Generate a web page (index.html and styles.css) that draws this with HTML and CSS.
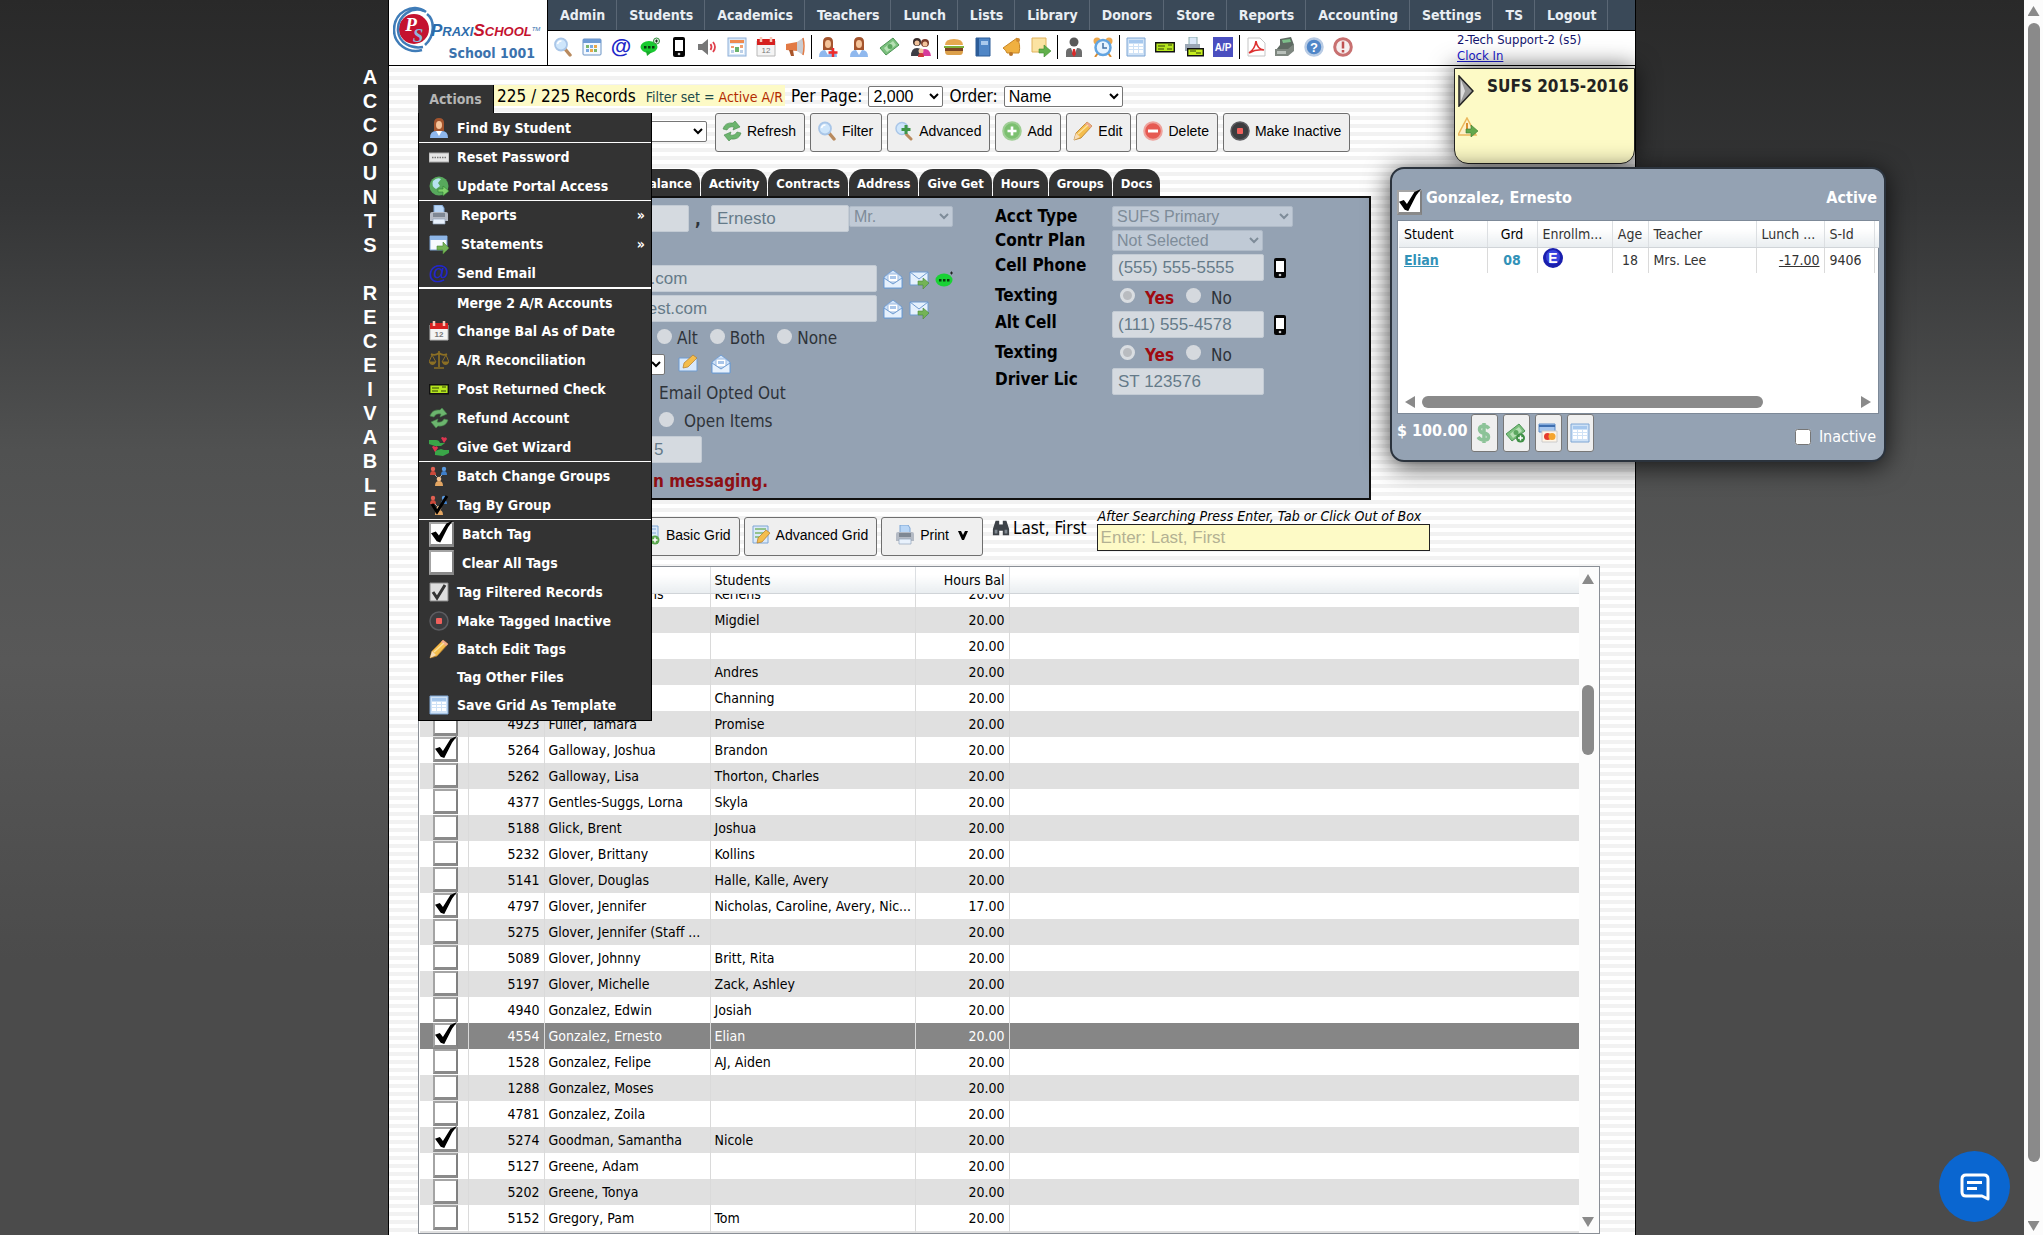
FILE: index.html
```html
<!DOCTYPE html>
<html lang="en">
<head>
  <meta charset="UTF-8">
  <meta name="viewport" content="width=device-width, initial-scale=1.0">
  <title>PraxiSchool - Accounts Receivable</title>
  <link rel="stylesheet" href="styles.css">
</head>
<body>
  <!-- icon sprite -->
  <svg class="sprite" aria-hidden="true">
    <symbol id="i-search" viewBox="0 0 20 20"><path d="M12 12l5 6" stroke="#b98a5e" stroke-width="3.4" stroke-linecap="round"/><circle cx="8" cy="7.500" r="6" fill="#cfe6fb" stroke="#a9c6e8" stroke-width="1.800"/><path d="M4.500 7a4 4 0 0 1 4-3" stroke="#fff" stroke-width="1.500" fill="none"/></symbol>
    <symbol id="i-searchplus" viewBox="0 0 20 20"><path d="M12 13l5 5" stroke="#b98a5e" stroke-width="3" stroke-linecap="round"/><circle cx="8" cy="7.500" r="6" fill="#cfe6fb" stroke="#a9c6e8" stroke-width="1.500"/><path d="M12 4v9M7.500 8.500h9" stroke="#3f9648" stroke-width="3"/></symbol>
    <symbol id="i-cal" viewBox="0 0 20 20"><rect x="1" y="2" width="18" height="16" rx="1" fill="#f4f9ff" stroke="#6b93c4"/><path d="M1 2h18v4H1z" fill="#6f9bd4"/><path d="M4 8h3v3H4zM12 12h3v3h-3z" fill="#7cb76b"/><path d="M8 8h3v3H8zM4 12h3v3H4z" fill="#7aa9e0"/><path d="M12 8h3v3h-3zM8 12h3v3H8z" fill="#eaa94a"/></symbol>
    <symbol id="i-at" viewBox="0 0 20 20"><text x="10" y="16" text-anchor="middle" font-family="Liberation Sans" font-size="21" font-weight="bold" fill="#2026c8">@</text></symbol>
    <symbol id="i-chat" viewBox="0 0 20 20"><ellipse cx="9" cy="10" rx="8.500" ry="6" fill="#19c930"/><path d="M6 14l1 5 5-4z" fill="#19a82a"/><path d="M4 9h2.500v2.500H4zM8 9h2.500v2.500H8zM12 9h2.500v2.500H12z" fill="#0b3b10"/><circle cx="16.500" cy="4" r="3" fill="#d9f3dc" stroke="#2f8a3a"/><path d="M16.500 2.500v3M15 4h3" stroke="#222"/></symbol>
    <symbol id="i-sms" viewBox="0 0 20 20"><ellipse cx="9" cy="11" rx="8.500" ry="6.500" fill="#19d234"/><path d="M4 10h2.500v2.500H4zM8 10h2.500v2.500H8zM12 10h2.500v2.500H12z" fill="#0b3b10"/><path d="M16.500 2.500v3M15 4h3" stroke="#222"/></symbol>
    <symbol id="i-phone" viewBox="0 0 20 20"><rect x="4" y="0" width="12" height="20" rx="2" fill="#050505"/><path d="M6 3h8v11H6z" fill="#fff"/><circle cx="10" cy="17" r="1.300" fill="#ccc"/></symbol>
    <symbol id="i-sound" viewBox="0 0 20 20"><path d="M0 7h4l6-5v16l-6-5H0z" fill="#777"/><path d="M12.500 7q2 3 0 6M15 5q4 5 0 10" stroke="#e0404c" stroke-width="1.800" fill="none"/></symbol>
    <symbol id="i-sched" viewBox="0 0 20 20"><rect x="1" y="1" width="18" height="18" fill="#d8e8f8" stroke="#8fb0d8"/><path d="M3 3h14v3H3z" fill="#f08a4e"/><path d="M3 7h14v10H3z" fill="#fff"/><path d="M4 9h3v2H4zM13 8h3v3h-3z" fill="#f0a070"/><path d="M8 10h4v5H8z" fill="#6bb36b"/><path d="M4 13h3v3H4zM13 13h3v3h-3z" fill="#bcd0e8"/></symbol>
    <symbol id="i-date" viewBox="0 0 20 20"><path d="M1 4h18v15H1z" fill="#f4f4f4" stroke="#b8b8b8"/><path d="M1 2h18v6H1z" fill="#d6201f"/><path d="M5 0v5M15 0v5" stroke="#f6c9b9" stroke-width="2.500"/><text x="10" y="16" text-anchor="middle" font-family="Liberation Sans" font-size="8" fill="#777">12</text></symbol>
    <symbol id="i-horn" viewBox="0 0 20 20"><path d="M1 7l11-2v9L1 13z" fill="#e27a45"/><path d="M12 5l6-4v17l-6-4z" fill="#c9ccd2"/><path d="M4 13h4l1 6H6z" fill="#a9552a"/><path d="M18 1q2 8 0 17" stroke="#e27a45" stroke-width="1.500" fill="none"/></symbol>
    <symbol id="i-person" viewBox="0 0 20 20"><path d="M5 13V5q0-5 5-5t5 5v8z" fill="#a4552e"/><ellipse cx="10" cy="7" rx="3" ry="4" fill="#f5c49a"/><path d="M1 20q0-7 6-7h6q6 0 6 7z" fill="#8fb8ee"/><path d="M7 13l3 5 3-5z" fill="#fff"/></symbol>
    <symbol id="i-personadd" viewBox="0 0 20 20"><use href="#i-person"/><path d="M15 11v9M10.500 15.500h9" stroke="#ef2b2b" stroke-width="2.500"/></symbol>
    <symbol id="i-money" viewBox="0 0 20 20"><path d="M0 11L13 1l6 7L6 18z" fill="#7cc07e" stroke="#4d9555"/><path d="M4 11l9-7 3 4-9 7z" fill="#b7e0b5"/><circle cx="10" cy="9.500" r="2.500" fill="#5ba75f"/></symbol>
    <symbol id="i-family" viewBox="0 0 20 20"><circle cx="6" cy="5" r="4" fill="#3a2c2a"/><circle cx="6" cy="6" r="2.500" fill="#f2c39b"/><circle cx="14" cy="6" r="4" fill="#7a3b2a"/><circle cx="14" cy="7" r="2.500" fill="#f2c39b"/><path d="M0 19q0-8 6-8t5 8z" fill="#3d3d45"/><path d="M9 19q0-7 5-7t6 7z" fill="#d63c9c"/><circle cx="10" cy="14" r="2.500" fill="#f2c39b"/><path d="M7 20q0-4 3-4t3 4z" fill="#ce3a3a"/></symbol>
    <symbol id="i-burger" viewBox="0 0 20 20"><path d="M1 8q0-6 9-6t9 6z" fill="#e6a850"/><path d="M0 9h20v2H0z" fill="#7fb03a"/><path d="M1 11h18v3H1z" fill="#7c4523"/><path d="M1 14h18q0 4-3 4H4q-3 0-3-4z" fill="#dca04a"/></symbol>
    <symbol id="i-book" viewBox="0 0 20 20"><path d="M3 1h14v18H3z" fill="#4f86c6" stroke="#2c5c98"/><path d="M3 1h3v18H3z" fill="#2c5c98"/><path d="M8 4h7v4H8z" fill="#a9c9ec"/></symbol>
    <symbol id="i-bell" viewBox="0 0 20 20"><path d="M1 11L15 1q4 6 2 15L5 16q-1-3-4-5z" fill="#f0b040" stroke="#c78626"/><circle cx="16" cy="3" r="2" fill="#d08a30"/><circle cx="9" cy="17" r="2" fill="#b9742a"/></symbol>
    <symbol id="i-noteout" viewBox="0 0 20 20"><path d="M1 1h14v14H1z" fill="#fbe3a2" stroke="#e0b25c"/><path d="M8 12h5V8l7 6-7 6v-4H8z" fill="#62b04c" stroke="#3e8a30" stroke-width=".6"/></symbol>
    <symbol id="i-suit" viewBox="0 0 20 20"><circle cx="10" cy="5" r="4.500" fill="#5a5a5a"/><path d="M2 20v-5q0-4 5-4h6q5 0 5 4v5z" fill="#6d6d6d"/><path d="M7 11h6l-3 8z" fill="#fff"/><path d="M9 12h2l1 5-2 3-2-3z" fill="#d92a2a"/></symbol>
    <symbol id="i-clock" viewBox="0 0 20 20"><circle cx="4" cy="4" r="3.500" fill="#eda84e"/><circle cx="16" cy="4" r="3.500" fill="#eda84e"/><path d="M5 16l-3 4M15 16l3 4" stroke="#d98c30" stroke-width="2"/><circle cx="10" cy="10.500" r="7.500" fill="#e8f4ff" stroke="#62a4e0" stroke-width="2.500"/><path d="M10 6v5h4" stroke="#4272a8" stroke-width="1.500" fill="none"/></symbol>
    <symbol id="i-grid" viewBox="0 0 20 20"><path d="M1 1h18v18H1z" fill="#cfe2f6" stroke="#7fa6d4"/><path d="M3 3h14v3H3z" fill="#a6c8ee"/><path d="M3 7h4v2H3zM8 7h4v2H8zM13 7h4v2h-4zM3 10h4v2H3zM8 10h4v2H8zM13 10h4v2h-4zM3 13h4v3H3zM8 13h4v3H8zM13 13h4v3h-4z" fill="#fff"/></symbol>
    <symbol id="i-check" viewBox="0 0 20 20"><path d="M.7 5.700h18.600v9H.7z" fill="#b5e61d" stroke="#111" stroke-width="1.400"/><path d="M3 9h7M3 12h6M12 12h5M13 8h4" stroke="#33400a"/></symbol>
    <symbol id="i-checkprint" viewBox="0 0 20 20"><path d="M5 0h8v8H5z" fill="#dbe8f8" stroke="#8aa"/><path d="M1 7h15v7H1z" fill="#9aa6b4"/><path d="M3.700 11.700h15.600v7H3.700z" fill="#c5ee1e" stroke="#111" stroke-width="1.400"/><path d="M6 14h6M12 16h5" stroke="#33400a"/></symbol>
    <symbol id="i-ap" viewBox="0 0 20 20"><path d="M0 0h20v20H0z" fill="#4a4fc0"/><text x="10" y="14" text-anchor="middle" font-family="Liberation Sans" font-size="10" font-weight="bold" fill="#fff">A/P</text></symbol>
    <symbol id="i-pdf" viewBox="0 0 20 20"><path d="M2 1h12l5 5v13H2z" fill="#fff" stroke="#c5c5c5"/><path d="M3 16q6-4 7-12q1 8 8 9q-8-1-15 3" stroke="#dd2f2f" stroke-width="1.600" fill="none"/></symbol>
    <symbol id="i-register" viewBox="0 0 20 20"><path d="M5 2l11-2 3 8-6 5H1l4-5z" fill="#5e6a62"/><path d="M7 3l8-1 1 3-8 1z" fill="#7dc08a"/><path d="M0 12h13l6-5v7l-6 5H0z" fill="#7e8780"/><path d="M2 14h9v3H2z" fill="#b9c1bb"/></symbol>
    <symbol id="i-help" viewBox="0 0 20 20"><circle cx="10" cy="10" r="8.500" fill="#4f86c8" stroke="#b8cbe4" stroke-width="2.500"/><text x="10" y="15" text-anchor="middle" font-family="Liberation Sans" font-size="13" font-weight="bold" fill="#fff">?</text></symbol>
    <symbol id="i-alert" viewBox="0 0 20 20"><circle cx="10" cy="10" r="8.300" fill="#f6eeee" stroke="#c87070" stroke-width="3"/><path d="M10 4.500v7M10 13v2.500" stroke="#c05050" stroke-width="2.500"/></symbol>
    <symbol id="i-refresh" viewBox="0 0 20 20"><path d="M1 8q2-7 10-6l2-2 5 6-7 3 1-3q-5-1-7 3z" fill="#6cb56e" stroke="#468a4c" stroke-width=".6"/><path d="M19 12q-2 7-10 6l-2 2-5-6 7-3-1 3q5 1 7-3z" fill="#6cb56e" stroke="#468a4c" stroke-width=".6"/></symbol>
    <symbol id="i-add" viewBox="0 0 20 20"><circle cx="10" cy="10" r="8.800" fill="#7cc070" stroke="#9fce95" stroke-width="2"/><path d="M10 5.500v9M5.500 10h9" stroke="#fff" stroke-width="2.600"/></symbol>
    <symbol id="i-pencil" viewBox="0 0 20 20"><path d="M1 19l2-7L14 1l5 4L8 17z" fill="#f4bd4c" stroke="#b27b2c" stroke-width=".8"/><path d="M1 19l2-7 4 4z" fill="#f7dcb5"/><path d="M14 1l5 4-2 2-5-4z" fill="#eda890"/><path d="M5 13L15 4" stroke="#fbe19c" stroke-width="1.500"/></symbol>
    <symbol id="i-delete" viewBox="0 0 20 20"><circle cx="10" cy="10" r="8.800" fill="#e65a52" stroke="#eea39d" stroke-width="2"/><path d="M5 10h10" stroke="#fff" stroke-width="3"/></symbol>
    <symbol id="i-stop" viewBox="0 0 20 20"><circle cx="10" cy="10" r="9" fill="#3c3c3f" stroke="#5c5c60" stroke-width="1.500"/><rect x="7" y="7" width="6" height="6" rx="1" fill="#f0605c"/></symbol>
    <symbol id="i-keys" viewBox="0 0 20 20"><path d="M0 6h20v9H0z" fill="#e6e6e6" stroke="#aaa"/><path d="M3 10.500h14" stroke="#777" stroke-width="1.500" stroke-dasharray="1.500 1"/></symbol>
    <symbol id="i-globe" viewBox="0 0 20 20"><circle cx="10" cy="10" r="9.500" fill="#57a85c"/><path d="M4 5q4-4 8-2l-3 4 2 3-4 3q-5-3-3-8z" fill="#b6e2ee"/><path d="M9 13h5v-3l6 5-6 5v-4H9z" fill="#7fd06b" stroke="#2e7d32" stroke-width=".6"/></symbol>
    <symbol id="i-printer" viewBox="0 0 20 20"><path d="M5 0h8l2 3v7H5z" fill="#b9d6f6" stroke="#7fa6d4"/><path d="M1 9q0-2 2-2h14q2 0 2 2v7H1z" fill="#b4bac4"/><path d="M4 8h12v4H4z" fill="#7f8894"/><path d="M4 14h12v5H4z" fill="#e8f1fc" stroke="#93a5ba" stroke-width=".7"/></symbol>
    <symbol id="i-winout" viewBox="0 0 20 20"><path d="M1 2h17v14H1z" fill="#f6faff" stroke="#7ba3d4"/><path d="M1 2h17v4H1z" fill="#8db5e6"/><path d="M8 12h6V8l6 6-6 6v-4H8z" fill="#74b356" stroke="#4b8636" stroke-width=".6"/></symbol>
    <symbol id="i-scales" viewBox="0 0 20 20"><path d="M10 1v16M5 18h10M2 4q4 2 8-1q4 3 8 1" stroke="#8c6f24" stroke-width="1.700" fill="none"/><path d="M3 5l-3 7h7zM17 5l-4 7h7z" fill="none" stroke="#8c6f24"/><path d="M0 12h7q-1 3-3.500 3T0 12zM13 12h7q-1 3-3.500 3T13 12z" fill="#8c6f24"/></symbol>
    <symbol id="i-hands" viewBox="0 0 20 20"><path d="M0 3h7q3 0 4 3h5l-4 3H6L0 7zM20 13h-5l-3-1-6 2 0 4 8 1 6-3z" fill="#3aa648"/><path d="M12 1q2-2 3 0q2-2 3 1l-3 4zM3 10q2-2 3 0q2-2 3 1l-3 4z" fill="#df3550"/></symbol>
    <symbol id="i-groups" viewBox="0 0 20 20"><circle cx="4" cy="3" r="2.200" fill="#e06052"/><path d="M1 9q0-4 3-4t3 4z" fill="#cc4a3c"/><circle cx="15" cy="3" r="2.200" fill="#5a9ae0"/><path d="M12 9q0-4 3-4t3 4z" fill="#3f7fca"/><path d="M6 9l2 2M13 9l-2 2" stroke="#aaa"/><circle cx="10" cy="13" r="2.300" fill="#f0c090"/><path d="M6 20q0-5 4-5t4 5z" fill="#e2a562"/></symbol>
    <symbol id="i-tagcheck" viewBox="0 0 20 20"><path d="M1 1h18v18H1z" fill="#ddd" stroke="#888"/><path d="M4 10l4 6 8-13" stroke="#333" stroke-width="3" fill="none"/></symbol>
    <symbol id="i-mailopen" viewBox="0 0 20 20"><path d="M1 8l9-7 9 7v11H1z" fill="#cfe2f8" stroke="#6f9bd0"/><path d="M5 5h10v8H5z" fill="#fff" stroke="#9ab9e0"/><path d="M7 7h6v3H7z" fill="#a9c6ea"/><path d="M1 9l9 6 9-6v10H1z" fill="#e6f1fd" stroke="#6f9bd0"/></symbol>
    <symbol id="i-mailout" viewBox="0 0 20 20"><path d="M1 3h18v13H1z" fill="#e6f1fd" stroke="#6f9bd0"/><path d="M1 3l9 7 9-7" fill="none" stroke="#6f9bd0"/><path d="M9 12h5V9l6 5-6 6v-4H9z" fill="#74b356" stroke="#4b8636" stroke-width=".6"/></symbol>
    <symbol id="i-mailedit" viewBox="0 0 20 20"><path d="M1 4h18v13H1z" fill="#d9e9fb" stroke="#6f9bd0"/><path d="M5 14l1-5 9-8 4 3-9 9z" fill="#f4bd4c" stroke="#b27b2c" stroke-width=".7"/></symbol>
    <symbol id="i-gridadd" viewBox="0 0 20 20"><path d="M2 1h15v17H2z" fill="#dbe9f9" stroke="#7fa6d4"/><path d="M4 4h11M4 8h11M4 12h11" stroke="#7fa6d4"/><circle cx="14" cy="15" r="4.500" fill="#5ba74e"/><path d="M14 12.500v5M11.500 15h5" stroke="#fff" stroke-width="1.500"/></symbol>
    <symbol id="i-gridedit" viewBox="0 0 20 20"><path d="M2 1h15v17H2z" fill="#dbe9f9" stroke="#7fa6d4"/><path d="M4 4h11M4 8h11M4 12h11" stroke="#7cb76b" stroke-width="1.500"/><path d="M6 18l1-5 8-8 4 3-8 9z" fill="#f4bd4c" stroke="#b27b2c" stroke-width=".7"/></symbol>
    <symbol id="i-binoc" viewBox="0 0 20 20"><path d="M4 2h4v4h4V2h4l3 9v7h-7v-5H8v5H1v-7z" fill="#3d4248"/><path d="M3 12h3v4H3zM14 12h3v4h-3z" fill="#7f878f"/></symbol>
    <symbol id="i-dollar" viewBox="0 0 20 20"><path d="M15 5.500q-2-2.500-5-2.500c-6 0-6 6 0 7s6 7 0 7q-4 0-6-3M10 0v20" fill="none" stroke="#8cc398" stroke-width="3.500"/></symbol>
    <symbol id="i-moneyadd" viewBox="0 0 20 20"><use href="#i-money"/><circle cx="14.500" cy="15" r="4.500" fill="#3f8f45"/><path d="M14.500 12.500v5M12 15h5" stroke="#fff" stroke-width="1.500"/></symbol>
    <symbol id="i-card" viewBox="0 0 20 20"><path d="M1 1h16v8H1z" fill="#a6c6ee" stroke="#5d8cc8"/><path d="M1 2h16v2H1z" fill="#3f6fb0"/><path d="M4 8h15v11H4z" fill="#fff4e4" stroke="#ccc"/><circle cx="9.500" cy="13.500" r="3.500" fill="#e63b2e"/><circle cx="14" cy="13.500" r="3.500" fill="#f5a52e"/></symbol>
    <symbol id="i-warnout" viewBox="0 0 20 20"><path d="M9 1l9 17H0z" fill="#fdf0c8" stroke="#eab65c" stroke-width="1.500"/><path d="M9 6v8" stroke="#d98c30" stroke-width="2"/><path d="M8 12h5V8l7 6-7 6v-4H8z" fill="#62a84c" stroke="#3e7a30" stroke-width=".6"/></symbol>
    <symbol id="i-enrolled" viewBox="0 0 20 20"><circle cx="10" cy="10" r="10" fill="#1a1fae"/><circle cx="10" cy="9" r="7" fill="#3a44dd"/><text x="10" y="15" text-anchor="middle" font-family="Liberation Sans" font-size="14" font-weight="bold" fill="#fff">E</text></symbol>
  </svg>

  <div class="page">
    <h1 class="side-title">A<br>C<br>C<br>O<br>U<br>N<br>T<br>S<br><br>R<br>E<br>C<br>E<br>I<br>V<br>A<br>B<br>L<br>E</h1>

    <main class="wrapper">
      <header class="header">
        <div class="logo">
          <svg class="logo-mark" viewBox="0 0 42 48">
            <circle cx="21" cy="23" r="15" fill="#c4122f"/>
            <path d="M33 6C20-4 1 6 1 24c0 14 14 24 28 20M31 5C20 0 4 9 5 25c1 12 13 18 25 16M34 8c8 6 8 22-2 31" fill="none" stroke="#3f7cb8" stroke-width="2.500"/>
            <text x="18" y="25" text-anchor="middle" font-family="Liberation Serif" font-size="19" font-style="italic" font-weight="bold" fill="#fff">P</text>
            <text x="25" y="36" text-anchor="middle" font-family="Liberation Serif" font-size="19" font-style="italic" font-weight="bold" fill="#8fb4dc">S</text>
          </svg>
          <div class="logo-text">
            <div class="logo-name"><b>P</b>RAXI<span><b>S</b>CHOOL</span><sup>TM</sup></div>
            <div class="logo-school">School 1001</div>
          </div>
        </div>
        <div class="header-main">
          <nav class="nav">
            <a href="#">Admin</a><a href="#">Students</a><a href="#">Academics</a><a href="#">Teachers</a><a href="#">Lunch</a><a href="#">Lists</a><a href="#">Library</a><a href="#">Donors</a><a href="#">Store</a><a href="#">Reports</a><a href="#">Accounting</a><a href="#">Settings</a><a href="#">TS</a><a href="#">Logout</a>
          </nav>
          <div class="iconbar">
            <div class="icons">
              <svg><use href="#i-search"/></svg><svg><use href="#i-cal"/></svg><svg><use href="#i-at"/></svg><svg><use href="#i-chat"/></svg><svg><use href="#i-phone"/></svg><svg><use href="#i-sound"/></svg><svg><use href="#i-sched"/></svg><svg><use href="#i-date"/></svg><svg><use href="#i-horn"/></svg>
            </div>
            <div class="icons icons-wide">
              <svg><use href="#i-personadd"/></svg><svg><use href="#i-person"/></svg><svg><use href="#i-money"/></svg><svg><use href="#i-family"/></svg>
            </div>
            <div class="icons">
              <svg><use href="#i-burger"/></svg><svg><use href="#i-book"/></svg><svg><use href="#i-bell"/></svg><svg><use href="#i-noteout"/></svg>
            </div>
            <div class="icons">
              <svg><use href="#i-suit"/></svg><svg><use href="#i-clock"/></svg>
            </div>
            <div class="icons">
              <svg><use href="#i-grid"/></svg><svg><use href="#i-check"/></svg><svg><use href="#i-checkprint"/></svg><svg><use href="#i-ap"/></svg>
            </div>
            <div class="icons">
              <svg><use href="#i-pdf"/></svg><svg><use href="#i-register"/></svg><svg><use href="#i-help"/></svg><svg><use href="#i-alert"/></svg>
            </div>
            <div class="user">2-Tech Support-2 (s5)<br><a href="#">Clock In</a></div>
          </div>
        </div>
      </header>

      <div class="content">
        <div class="records">
          <div class="actions">
            <button class="actions-tab" type="button">Actions</button>
            <ul class="menu">
              <li><svg><use href="#i-person"/></svg>Find By Student</li>
              <li class="line"><svg><use href="#i-keys"/></svg>Reset Password</li>
              <li><svg><use href="#i-globe"/></svg>Update Portal Access</li>
              <li class="line sub"><svg><use href="#i-printer"/></svg>Reports<span>»</span></li>
              <li class="sub"><svg><use href="#i-winout"/></svg>Statements<span>»</span></li>
              <li><svg><use href="#i-at"/></svg>Send Email</li>
              <li class="line thick"><svg></svg>Merge 2 A/R Accounts</li>
              <li><svg><use href="#i-date"/></svg>Change Bal As of Date</li>
              <li><svg><use href="#i-scales"/></svg>A/R Reconciliation</li>
              <li><svg><use href="#i-check"/></svg>Post Returned Check</li>
              <li><svg><use href="#i-refresh"/></svg>Refund Account</li>
              <li><svg><use href="#i-hands"/></svg>Give Get Wizard</li>
              <li class="line"><svg><use href="#i-groups"/></svg>Batch Change Groups</li>
              <li><svg><use href="#i-groups"/><path d="M3 9l5 8L18 1" stroke="#000" stroke-width="3" fill="none"/></svg>Tag By Group</li>
              <li class="line"><i class="tick on"></i>Batch Tag</li>
              <li><i class="tick"></i>Clear All Tags</li>
              <li><svg><use href="#i-tagcheck"/></svg>Tag Filtered Records</li>
              <li><svg><use href="#i-stop"/></svg>Make Tagged Inactive</li>
              <li><svg><use href="#i-pencil"/></svg>Batch Edit Tags</li>
              <li><svg></svg>Tag Other Files</li>
              <li><svg><use href="#i-grid"/></svg>Save Grid As Template</li>
            </ul>
          </div>
          <div class="count">225 / 225 Records <small>Filter set = <em>Active A/R</em></small></div>
          <label for="perpage">Per Page:</label>
          <select id="perpage" class="w-page"><option>2,000</option></select>
          <label for="order">Order:</label>
          <select id="order" class="w-order"><option>Name</option></select>
        </div>

        <div class="tools">
          <select class="w-filter" aria-label="Filter"><option></option></select>
          <button class="btn" type="button"><svg><use href="#i-refresh"/></svg>Refresh</button>
          <button class="btn" type="button"><svg><use href="#i-search"/></svg>Filter</button>
          <button class="btn" type="button"><svg><use href="#i-searchplus"/></svg>Advanced</button>
          <button class="btn" type="button"><svg><use href="#i-add"/></svg>Add</button>
          <button class="btn" type="button"><svg><use href="#i-pencil"/></svg>Edit</button>
          <button class="btn" type="button"><svg><use href="#i-delete"/></svg>Delete</button>
          <button class="btn" type="button"><svg><use href="#i-stop"/></svg>Make Inactive</button>
        </div>

        <nav class="tabs">
          <a href="#">Balance</a><a href="#">Activity</a><a href="#">Contracts</a><a href="#">Address</a><a href="#">Give Get</a><a href="#">Hours</a><a href="#">Groups</a><a href="#">Docs</a>
        </nav>

        <form class="panel">
          <div class="col-left">
            <div class="frow names">
              <input type="text" class="w-last" value="Gonzalez" aria-label="Last name" disabled><b>,</b>
              <input type="text" class="w-first" value="Ernesto" aria-label="First name" disabled>
              <select class="w-title" aria-label="Title" disabled><option>Mr.</option></select>
            </div>
            <div class="frow mail mail-first">
              <input type="text" value="ernesto@il.com" aria-label="Email" disabled>
              <svg><use href="#i-mailopen"/></svg><svg><use href="#i-mailout"/></svg><svg><use href="#i-sms"/></svg>
            </div>
            <div class="frow mail">
              <input type="text" value="ernesto@test.com" aria-label="Alt email" disabled>
              <svg><use href="#i-mailopen"/></svg><svg><use href="#i-mailout"/></svg>
            </div>
            <div class="frow radios">
              <label><input type="radio" name="use" disabled>Alt</label>
              <label><input type="radio" name="use" disabled>Both</label>
              <label><input type="radio" name="use" disabled>None</label>
            </div>
            <div class="frow letter">
              <select class="w-letter" aria-label="Letter"><option></option></select>
              <svg><use href="#i-mailedit"/></svg><svg><use href="#i-mailopen"/></svg>
            </div>
            <div class="frow opted">Email Opted Out</div>
            <div class="frow radios open">
              <label><input type="radio" name="items" disabled>Open Items</label>
            </div>
            <div class="frow"><input type="text" class="w-num" value="10000457  5" aria-label="Number" disabled></div>
            <div class="notice">in messaging.</div>
          </div>
          <div class="col-right">
            <label for="type">Acct Type</label>
            <select id="type" class="w-type" disabled><option>SUFS Primary</option></select>
            <label for="plan">Contr Plan</label>
            <select id="plan" class="w-plan" disabled><option>Not Selected</option></select>
            <label for="cell">Cell Phone</label>
            <div class="cell"><input id="cell" type="text" value="(555) 555-5555" disabled><svg><use href="#i-phone"/></svg></div>
            <span class="lbl">Texting</span>
            <div class="yesno"><label class="yes"><input type="radio" name="t1" checked disabled>Yes</label><label><input type="radio" name="t1" disabled>No</label></div>
            <label for="alt">Alt Cell</label>
            <div class="cell"><input id="alt" type="text" value="(111) 555-4578" disabled><svg><use href="#i-phone"/></svg></div>
            <span class="lbl">Texting</span>
            <div class="yesno"><label class="yes"><input type="radio" name="t2" checked disabled>Yes</label><label><input type="radio" name="t2" disabled>No</label></div>
            <label for="lic">Driver Lic</label>
            <div class="cell"><input id="lic" type="text" value="ST 123576" disabled></div>
          </div>
        </form>

        <div class="gridbar">
          <button class="btn" type="button"><svg><use href="#i-gridadd"/></svg>Basic Grid</button>
          <button class="btn" type="button"><svg><use href="#i-gridedit"/></svg>Advanced Grid</button>
          <button class="btn print" type="button"><svg><use href="#i-printer"/></svg>Print<svg class="caret" viewBox="0 0 10 10"><path d="M0 1h3l2 4 2-4h3L6 10H4z"/></svg></button>
          <label class="find" for="find"><svg><use href="#i-binoc"/></svg>Last, First</label>
          <div class="search">
            <i>After Searching Press Enter, Tab or Click Out of Box</i>
            <input id="find" type="text" placeholder="Enter: Last, First">
          </div>
        </div>

        <section class="list">
          <div class="list-view">
          <table class="accounts">
            <colgroup><col class="c-tag"><col class="c-id"><col class="c-name"><col class="c-stu"><col class="c-hrs"><col></colgroup>
            <thead><tr><th></th><th></th><th></th><th>Students</th><th class="num">Hours Bal</th><th></th></tr></thead>
            <tbody>
              <tr class="cut"><td></td><td></td><td><div class="clip end">ns</div></td><td><div class="clip">Kerlens</div></td><td class="num"><div class="clip">20.00</div></td><td></td></tr>
              <tr><td></td><td></td><td></td><td>Migdiel</td><td class="num">20.00</td><td></td></tr>
              <tr><td></td><td></td><td></td><td></td><td class="num">20.00</td><td></td></tr>
              <tr><td></td><td></td><td></td><td>Andres</td><td class="num">20.00</td><td></td></tr>
              <tr><td></td><td></td><td></td><td>Channing</td><td class="num">20.00</td><td></td></tr>
              <tr><td><input type="checkbox" class="tick" aria-label="Tag 4923"></td><td class="num">4923</td><td>Fuller, Tamara</td><td>Promise</td><td class="num">20.00</td><td></td></tr>
              <tr><td><input type="checkbox" class="tick" aria-label="Tag 5264" checked></td><td class="num">5264</td><td>Galloway, Joshua</td><td>Brandon</td><td class="num">20.00</td><td></td></tr>
              <tr><td><input type="checkbox" class="tick" aria-label="Tag 5262"></td><td class="num">5262</td><td>Galloway, Lisa</td><td>Thorton, Charles</td><td class="num">20.00</td><td></td></tr>
              <tr><td><input type="checkbox" class="tick" aria-label="Tag 4377"></td><td class="num">4377</td><td>Gentles-Suggs, Lorna</td><td>Skyla</td><td class="num">20.00</td><td></td></tr>
              <tr><td><input type="checkbox" class="tick" aria-label="Tag 5188"></td><td class="num">5188</td><td>Glick, Brent</td><td>Joshua</td><td class="num">20.00</td><td></td></tr>
              <tr><td><input type="checkbox" class="tick" aria-label="Tag 5232"></td><td class="num">5232</td><td>Glover, Brittany</td><td>Kollins</td><td class="num">20.00</td><td></td></tr>
              <tr><td><input type="checkbox" class="tick" aria-label="Tag 5141"></td><td class="num">5141</td><td>Glover, Douglas</td><td>Halle, Kalle, Avery</td><td class="num">20.00</td><td></td></tr>
              <tr><td><input type="checkbox" class="tick" aria-label="Tag 4797" checked></td><td class="num">4797</td><td>Glover, Jennifer</td><td>Nicholas, Caroline, Avery, Nic...</td><td class="num">17.00</td><td></td></tr>
              <tr><td><input type="checkbox" class="tick" aria-label="Tag 5275"></td><td class="num">5275</td><td>Glover, Jennifer (Staff ...</td><td></td><td class="num">20.00</td><td></td></tr>
              <tr><td><input type="checkbox" class="tick" aria-label="Tag 5089"></td><td class="num">5089</td><td>Glover, Johnny</td><td>Britt, Rita</td><td class="num">20.00</td><td></td></tr>
              <tr><td><input type="checkbox" class="tick" aria-label="Tag 5197"></td><td class="num">5197</td><td>Glover, Michelle</td><td>Zack, Ashley</td><td class="num">20.00</td><td></td></tr>
              <tr><td><input type="checkbox" class="tick" aria-label="Tag 4940"></td><td class="num">4940</td><td>Gonzalez, Edwin</td><td>Josiah</td><td class="num">20.00</td><td></td></tr>
              <tr class="selected"><td><input type="checkbox" class="tick" aria-label="Tag 4554" checked></td><td class="num">4554</td><td>Gonzalez, Ernesto</td><td>Elian</td><td class="num">20.00</td><td></td></tr>
              <tr><td><input type="checkbox" class="tick" aria-label="Tag 1528"></td><td class="num">1528</td><td>Gonzalez, Felipe</td><td>AJ, Aiden</td><td class="num">20.00</td><td></td></tr>
              <tr><td><input type="checkbox" class="tick" aria-label="Tag 1288"></td><td class="num">1288</td><td>Gonzalez, Moses</td><td></td><td class="num">20.00</td><td></td></tr>
              <tr><td><input type="checkbox" class="tick" aria-label="Tag 4781"></td><td class="num">4781</td><td>Gonzalez, Zoila</td><td></td><td class="num">20.00</td><td></td></tr>
              <tr><td><input type="checkbox" class="tick" aria-label="Tag 5274" checked></td><td class="num">5274</td><td>Goodman, Samantha</td><td>Nicole</td><td class="num">20.00</td><td></td></tr>
              <tr><td><input type="checkbox" class="tick" aria-label="Tag 5127"></td><td class="num">5127</td><td>Greene, Adam</td><td></td><td class="num">20.00</td><td></td></tr>
              <tr><td><input type="checkbox" class="tick" aria-label="Tag 5202"></td><td class="num">5202</td><td>Greene, Tonya</td><td></td><td class="num">20.00</td><td></td></tr>
              <tr><td><input type="checkbox" class="tick" aria-label="Tag 5152"></td><td class="num">5152</td><td>Gregory, Pam</td><td>Tom</td><td class="num">20.00</td><td></td></tr>
              <tr><td></td><td></td><td></td><td></td><td></td><td></td></tr>
            </tbody>
          </table>
          </div>
          <div class="scroll list-scroll"><i class="up"></i><i class="thumb"></i><i class="down"></i></div>
        </section>
      </div>

      <aside class="note">
        <svg class="note-arrow" viewBox="0 0 16 32"><path d="M1 1l14 15L1 31z" fill="#9a9a9a" stroke="#222" stroke-width="1.500"/><path d="M3 5l4 11-4 10z" fill="#ddd"/></svg>
        <h2>SUFS 2015-2016</h2>
        <svg class="note-warn"><use href="#i-warnout"/></svg>
      </aside>

      <aside class="card">
        <div class="card-head">
          <input type="checkbox" class="tick" id="cardtag" checked>
          <label for="cardtag">Gonzalez, Ernesto</label>
          <b>Active</b>
        </div>
        <div class="card-box">
          <table class="students">
            <colgroup><col class="s-name"><col class="s-grd"><col class="s-enr"><col class="s-age"><col class="s-tea"><col class="s-lun"><col class="s-id"><col></colgroup>
            <thead><tr><th class="dark">Student</th><th class="dark mid">Grd</th><th>Enrollm...</th><th class="mid">Age</th><th>Teacher</th><th>Lunch ...</th><th>S-Id</th><th></th></tr></thead>
            <tbody><tr><td><a href="#">Elian</a></td><td class="mid grade">08</td><td><svg><use href="#i-enrolled"/></svg></td><td class="mid">18</td><td>Mrs. Lee</td><td class="num"><u>-17.00</u></td><td>9406</td><td></td></tr></tbody>
          </table>
          <div class="hscroll"><i class="left"></i><i class="track"><i class="thumb"></i></i><i class="right"></i></div>
        </div>
        <div class="card-foot">
          <b>$ 100.00</b>
          <button type="button" aria-label="Payment"><svg><use href="#i-dollar"/></svg></button>
          <button type="button" aria-label="Add payment"><svg><use href="#i-moneyadd"/></svg></button>
          <button type="button" aria-label="Card"><svg><use href="#i-card"/></svg></button>
          <button type="button" aria-label="Ledger"><svg><use href="#i-grid"/></svg></button>
          <label class="inactive"><input type="checkbox">Inactive</label>
        </div>
      </aside>
    </main>
  </div>

  <div class="scroll page-scroll"><i class="up"></i><i class="thumb"></i><i class="down"></i></div>

  <button class="chat" type="button" aria-label="Chat">
    <svg viewBox="0 0 30 28"><path d="M6 2h18q4 0 4 4v20l-6-3H6q-4 0-4-4V6q0-4 4-4z" fill="none" stroke="#fff" stroke-width="3" stroke-linejoin="round"/><path d="M7 9.500h15M7 15.500h10" stroke="#fff" stroke-width="3"/></svg>
  </button>
</body>
</html>
```
FILE: styles.css
```css
* {
  box-sizing: border-box;
}
body {
  margin: 0;
  height: 100vh;
  display: flex;
  overflow: hidden;
  font-family: "DejaVu Sans Condensed", "DejaVu Sans", sans-serif;
  font-size: 14px;
  color: #000;
  background: linear-gradient(#292929 0, #343536 200px, #505151 450px, #585858 660px, #4b4b4b 960px, #4b4b4b 100%);
}
.sprite {
  display: none;
}
svg {
  width: 20px;
  height: 20px;
  flex: none;
}
input, select, button {
  font-family: "Liberation Sans", Arial, sans-serif;
}
select {
  height: 21px;
  font-size: 16px;
  padding: 0;
  background: #fff;
  border: 1px solid #767676;
  border-radius: 2px;
  color: #000;
}
.page {
  flex: 1;
  display: grid;
  grid-template-columns: 1fr minmax(0, 1248px) 1fr;
  min-width: 0;
}
.side-title {
  margin: 65px 8px 0 0;
  justify-self: end;
  width: 20px;
  text-align: center;
  color: #fff;
  font: bold 20px/24px "Liberation Sans", Arial, sans-serif;
}
.wrapper {
  position: relative;
  height: 100vh;
  display: flex;
  flex-direction: column;
  border-left: 1px solid #000;
  border-right: 1px solid #000;
  background: repeating-linear-gradient(#fff 0, #fff 4px, #f2f2f2 4px, #f2f2f2 8px);
}

/* header */
.header {
  display: flex;
  height: 66px;
  background: #fff;
  border-bottom: 1px solid #000;
}
.logo {
  display: flex;
  width: 158px;
  padding: 6px 0 0 4px;
}
.logo-mark {
  width: 42px;
  height: 48px;
}
.logo-text {
  width: 112px;
  margin-left: -4px;
  padding-top: 14px;
}
.logo-name {
  font: italic bold 13px/22px "Liberation Sans", Arial, sans-serif;
  color: #2d6cab;
  white-space: nowrap;
}
.logo-name b {
  font-size: 17px;
}
.logo-name span {
  color: #c4122f;
}
.logo-name sup {
  font-size: 6px;
  font-weight: normal;
  line-height: 0;
}
.logo-school {
  margin-right: 8px;
  text-align: right;
  font-size: 14px;
  line-height: 20px;
  font-weight: bold;
  color: #3b72ad;
}
.header-main {
  flex: 1;
  border-left: 1px solid #000;
}
.nav {
  display: flex;
  height: 31px;
  background: #3a4958;
  border-bottom: 1px solid #000;
}
.nav a {
  padding: 0 11px 0 12px;
  line-height: 30px;
  font-weight: bold;
  color: #e9eef3;
  text-decoration: none;
  border-right: 1px solid #5a6775;
}
.iconbar {
  display: flex;
  height: 32px;
  align-items: center;
}
.icons {
  display: flex;
  gap: 7px;
  padding: 0 5px;
  height: 24px;
  align-items: center;
  border-left: 1px solid #000;
}
.icons:first-child {
  border-left: none;
  padding-left: 4px;
}
.icons svg {
  width: 22px;
}
.icons-wide {
  gap: 9px;
}
.user {
  margin: 2px 0 0 auto;
  width: 178px;
  font-size: 13px;
  line-height: 16px;
  color: #14146e;
}
.user a {
  color: #1a1ad0;
}

/* records row */
.content {
  flex: 1;
  display: flex;
  flex-direction: column;
  padding: 19px 35px 1px 29px;
  min-height: 0;
}
.records {
  display: flex;
  height: 28px;
  font-size: 17px;
}
.records select {
  margin-top: 1px;
}
.actions {
  position: relative;
  z-index: 5;
}
.actions-tab {
  width: 76px;
  height: 28px;
  padding: 0;
  border: 0;
  border-right: 1px solid #000;
  background: #333;
  color: #b5b5b5;
  font: bold 14px "DejaVu Sans Condensed", "DejaVu Sans", sans-serif;
}
.count {
  height: 21px;
  padding: 0 2px 0 3px;
  line-height: 22px;
  background: #fdfac6;
  white-space: nowrap;
}
.count small {
  margin-left: 5px;
  font-size: 14px;
  color: #1d4a4a;
}
.count em {
  font-style: normal;
  color: #b32a00;
}
.records label {
  margin: 0 6px;
  line-height: 22px;
  white-space: nowrap;
}
.w-page {
  width: 75px;
}
.w-order {
  width: 119px;
}

/* actions menu */
.menu {
  position: absolute;
  top: 28px;
  left: 0;
  width: 234px;
  margin: 0;
  padding: 0 0 1px;
  list-style: none;
  background: #333;
  border: 1px solid #000;
  border-top: 0;
}
.menu li {
  display: flex;
  align-items: center;
  height: 29px;
  padding-left: 10px;
  gap: 8px;
  font-size: 14px;
  font-weight: bold;
  color: #fff;
  white-space: nowrap;
}
.menu li:nth-child(n+19) {
  height: 28px;
}
.menu .line {
  border-top: 1px solid #fff;
}
.menu .thick {
  border-top-width: 2px;
}
.menu .sub {
  gap: 12px;
}
.menu .sub span {
  margin-left: auto;
  padding-right: 6px;
}

/* tick boxes with the heavy check mark */
.tick {
  appearance: none;
  position: relative;
  flex: none;
  display: block;
  width: 25px;
  height: 25px;
  margin: 0;
  background: #fff;
  border: 2px solid #a4a4a4;
  border-right-color: #808080;
  border-bottom: 3px solid #8a8a8a;
}
.tick.on::before, .tick:checked::before {
  content: "";
  position: absolute;
  left: 0;
  top: -3px;
  width: 22px;
  height: 22px;
  background: #000;
  clip-path: polygon(0 58%, 22% 50%, 36% 68%, 70% 14%, 100% 0, 78% 30%, 42% 100%, 26% 94%);
}

/* buttons */
.tools {
  display: flex;
  gap: 5px;
  margin-left: 100px;
}
.tools select {
  margin-top: 8px;
}
.w-filter {
  width: 189px;
  margin-right: 3px;
}
.btn {
  display: flex;
  align-items: center;
  height: 39px;
  padding: 0 8px 3px 6px;
  gap: 5px;
  font-size: 14px;
  white-space: nowrap;
  color: #000;
  background: #efefef;
  border: 1px solid #6f6f6f;
  border-radius: 3px;
}

/* tabs */
.tabs {
  display: flex;
  gap: 1px;
  margin: 17px 0 0 214px;
}
.tabs a {
  padding: 0 8px;
  height: 27px;
  line-height: 29px;
  font-size: 13px;
  font-weight: bold;
  color: #fff;
  text-decoration: none;
  background: #333;
  border-radius: 14px 14px 0 0;
}

/* details panel */
.panel {
  display: flex;
  width: 953px;
  height: 304px;
  padding: 7px 0 0 143px;
  background: #94a2b3;
  border: 2px solid #111;
  font-size: 17px;
}
.col-left {
  width: 432px;
}
.frow {
  display: flex;
  align-items: center;
  height: 27px;
  color: #2e3339;
}
.panel input[type=text] {
  height: 27px;
  padding: 0 5px;
  border: 1px solid #c3cbd4;
  border-radius: 2px;
  background: #d5dae0;
  color: #657a89;
  font-size: 17px;
}
.panel select:disabled {
  border-color: #b0bbc8;
  background: #c0cad6;
  color: #7e8c99;
  opacity: 1;
}
.panel input[type=radio] {
  appearance: none;
  width: 15px;
  height: 15px;
  margin: 0 0 4px;
  border-radius: 50%;
  background: #d5d9de;
}
.panel input[type=radio]:checked {
  background: #b9bcc0;
  border: 3px solid #d9dde1;
}
.names {
  align-items: flex-start;
  margin-bottom: 33px;
}
.names b {
  width: 22px;
  padding: 4px 0 0 6px;
}
.names select {
  margin-top: 1px;
}
.w-last {
  width: 126px;
}
.w-first {
  width: 138px;
}
.w-title {
  width: 104px;
}
.mail {
  gap: 6px;
}
.mail-first {
  margin-bottom: 3px;
}
.mail input[type=text] {
  width: 314px;
}
.radios {
  height: 32px;
  padding-left: 94px;
  gap: 12px;
}
.radios label {
  display: flex;
  align-items: center;
  gap: 5px;
}
.radios.open {
  height: 30px;
  padding-left: 96px;
}
.radios.open label {
  gap: 10px;
}
.letter {
  height: 20px;
  gap: 13px;
}
.w-letter {
  width: 102px;
}
.opted {
  height: 32px;
  padding: 6px 0 0 96px;
}
.w-num {
  width: 139px;
}
.notice {
  width: 205px;
  line-height: 36px;
  text-align: right;
  font-weight: bold;
  color: #8e0f14;
}
.col-right {
  flex: 1;
  display: grid;
  grid-template-columns: 117px 1fr;
  grid-template-rows: 24px 25px 27px 30px 27px 30px 27px;
}
.col-right > label {
  line-height: 22px;
  font-weight: bold;
}
.lbl {
  line-height: 28px;
  font-weight: bold;
}
.col-right select {
  margin-top: 1px;
}
.w-type {
  width: 181px;
}
.w-plan {
  width: 151px;
}
.cell {
  display: flex;
  align-items: center;
  gap: 6px;
}
.cell input[type=text] {
  width: 152px;
}
.yesno {
  display: flex;
  align-items: center;
  gap: 12px;
  padding: 3px 0 0 8px;
  color: #2e3339;
}
.yesno label {
  display: flex;
  align-items: center;
  gap: 10px;
}
.yesno .yes {
  font-weight: bold;
  color: #a00a10;
}

/* grid toolbar */
.gridbar {
  display: flex;
  gap: 4px;
  height: 66px;
  padding-top: 17px;
  margin-left: 216px;
}
.print {
  padding-left: 13px;
  padding-right: 14px;
}
.caret {
  width: 10px;
  height: 10px;
  margin-left: 4px;
}
.find {
  display: flex;
  align-items: center;
  height: 22px;
  margin-left: 5px;
  gap: 3px;
  font-size: 17px;
  white-space: nowrap;
}
.find svg {
  width: 18px;
  height: 18px;
}
.search {
  width: 333px;
  margin: -9px 0 0 6px;
}
.search i {
  display: block;
  padding-left: 1px;
  font-size: 14px;
  line-height: 16px;
  white-space: nowrap;
}
.search input {
  display: block;
  width: 100%;
  height: 27px;
  padding: 0 3px;
  font-size: 17px;
  background: #fdfac6;
  border: 1px solid #222;
}
.search input::placeholder {
  color: #b3b193;
}

/* accounts list */
.list {
  flex: 1;
  display: flex;
  min-height: 0;
  background: #fff;
  border: 1px solid #8a8f96;
}
.list-view {
  flex: 1;
  min-width: 0;
  overflow: hidden;
  padding-left: 1px;
}
table {
  width: 100%;
  table-layout: fixed;
  border-collapse: collapse;
}
.c-tag {
  width: 48px;
}
.c-id {
  width: 76px;
}
.c-name {
  width: 166px;
}
.c-stu {
  width: 205px;
}
.c-hrs {
  width: 94px;
}
th {
  height: 26px;
  padding: 0 4px;
  font-weight: normal;
  text-align: left;
  background: linear-gradient(#fff 30%, #e9edf0);
  border-right: 1px solid #dcdfe2;
  border-bottom: 1px solid #d0d4d8;
}
th:last-child, td:last-child {
  border-right: none;
}
td {
  height: 26px;
  padding: 0 4px;
  white-space: nowrap;
  border-right: 1px solid #dadada;
}
.accounts tbody tr:nth-child(even) {
  background: #e0e0e0;
}
.accounts tbody tr.selected:nth-child(even) {
  background: #868686;
  color: #fff;
}
.accounts .tick {
  margin-left: 9px;
}
.accounts .cut td {
  height: 13px;
}
.clip {
  display: flow-root;
  height: 13px;
  overflow: hidden;
  line-height: 1px;
}
.end {
  text-align: right;
  padding-right: 42px;
}
.accounts .num, .students .num {
  text-align: right;
}

/* drawn scrollbars */
.scroll {
  display: flex;
  flex-direction: column;
  align-items: center;
  background: #fcfcfc;
}
.scroll i, .hscroll i {
  display: block;
}
.up, .down {
  width: 12px;
  height: 10px;
  background: #8a8a8a;
  clip-path: polygon(50% 0, 100% 100%, 0 100%);
}
.down {
  margin-top: auto;
  clip-path: polygon(0 0, 100% 0, 50% 100%);
}
.thumb {
  background: #8a8a8a;
  border-radius: 6px;
}
.list-scroll {
  width: 20px;
  padding: 7px 2px 6px 0;
}
.list-scroll .thumb {
  width: 12px;
  height: 70px;
  margin-top: 101px;
}
.page-scroll {
  width: 19px;
  padding: 6px 0 4px;
}
.page-scroll .thumb {
  width: 12px;
  height: 93%;
  margin-top: 7px;
}

/* sticky note */
.note {
  position: absolute;
  top: 68px;
  right: 0;
  width: 181px;
  height: 96px;
  display: grid;
  grid-template-columns: 29px 1fr;
  grid-template-rows: 42px 1fr;
  padding: 6px 3px;
  background: #fdfac6;
  border: 1px solid #222;
  border-radius: 0 0 14px 14px;
  box-shadow: 0 0 24px rgba(0, 0, 0, 0.7);
}
.note h2 {
  margin: 0;
  font-size: 17px;
  line-height: 23px;
  white-space: nowrap;
  color: #222;
}
.note-arrow {
  width: 16px;
  height: 32px;
}

/* student card */
.card {
  position: absolute;
  top: 167px;
  left: 1001px;
  width: 496px;
  padding: 16px 5px 7px;
  background: #94a2b3;
  border: 2px solid #2b333d;
  border-radius: 14px;
  box-shadow: 0 4px 26px rgba(0, 0, 0, 0.75);
}
.card-head {
  display: flex;
  align-items: center;
  height: 35px;
  gap: 4px;
  font-size: 16px;
  font-weight: bold;
  color: #fff;
}
.card-head b {
  margin-left: auto;
  padding-right: 2px;
}
.card-head label, .card-head b {
  margin-top: -10px;
}
.card-box {
  background: #fff;
  border: 1px solid #7d8998;
  height: 194px;
  display: flex;
  flex-direction: column;
}
.students {
  margin-left: 1px;
}
.students th, .students td {
  padding: 0 5px;
  color: #333;
  font-size: 14px;
  white-space: nowrap;
}
.students th.dark {
  color: #000;
}
.students .mid {
  padding: 0;
  text-align: center;
}
.students .num {
  padding-right: 4px;
}
.students svg {
  display: block;
  margin-top: -4px;
}
.students a {
  font-weight: bold;
  color: #3292b8;
}
.students .grade {
  font-weight: bold;
  color: #3292b8;
}
.s-name {
  width: 88px;
}
.s-grd {
  width: 50px;
}
.s-enr {
  width: 75px;
}
.s-age {
  width: 36px;
}
.s-tea {
  width: 108px;
}
.s-lun {
  width: 68px;
}
.s-id {
  width: 50px;
}
.hscroll {
  display: flex;
  align-items: center;
  gap: 7px;
  margin-top: auto;
  padding: 5px 7px;
}
.left, .right {
  width: 10px;
  height: 12px;
  background: #8a8a8a;
  clip-path: polygon(0 50%, 100% 0, 100% 100%);
}
.right {
  clip-path: polygon(0 0, 100% 50%, 0 100%);
}
.track {
  flex: 1;
}
.hscroll .thumb {
  width: 79%;
  height: 12px;
}
.card-foot {
  display: flex;
  gap: 5px;
  height: 39px;
  color: #fff;
  font-size: 16px;
}
.card-foot b {
  margin-right: -2px;
  line-height: 34px;
  white-space: nowrap;
}
.card-foot button {
  width: 27px;
  height: 38px;
  padding: 0;
  background: #efefef;
  border: 1px solid #777;
  border-radius: 3px;
}
.card-foot button svg {
  display: block;
  margin: 0 auto;
}
.inactive {
  display: flex;
  align-items: center;
  gap: 8px;
  margin-left: auto;
  padding: 6px 3px 0 0;
}
.inactive input {
  width: 16px;
  height: 16px;
  margin: 0;
}

.chat {
  position: fixed;
  right: 33px;
  bottom: 13px;
  width: 71px;
  height: 71px;
  padding: 0;
  border: 0;
  border-radius: 50%;
  background: #0a66d0;
}
.chat svg {
  display: block;
  width: 30px;
  height: 28px;
  margin: 0 auto;
}
```
